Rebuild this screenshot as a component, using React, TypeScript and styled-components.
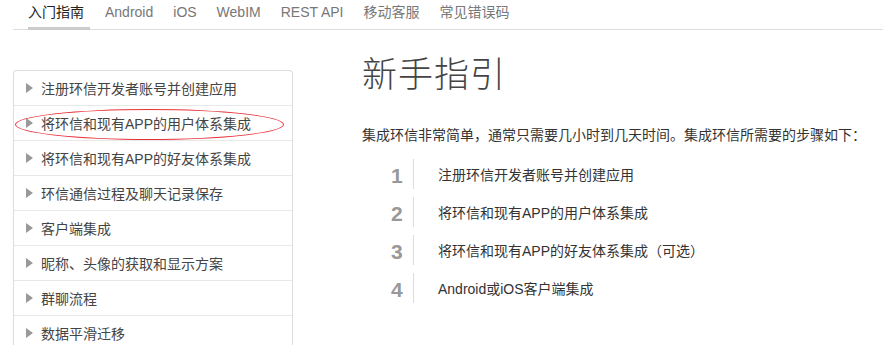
import styled, { createGlobalStyle } from "styled-components";

const GlobalStyle = createGlobalStyle`
  body {
    margin: 0;
    background: #fff;
    font-family: "Liberation Sans", Arial, "Noto Sans CJK SC", sans-serif;
    color: #333;
  }
`;

const navItems = ["入门指南", "Android", "iOS", "WebIM", "REST API", "移动客服", "常见错误码"];

const menuItems = [
  "注册环信开发者账号并创建应用",
  "将环信和现有APP的用户体系集成",
  "将环信和现有APP的好友体系集成",
  "环信通信过程及聊天记录保存",
  "客户端集成",
  "昵称、头像的获取和显示方案",
  "群聊流程",
  "数据平滑迁移",
];

const steps = [
  "注册环信开发者账号并创建应用",
  "将环信和现有APP的用户体系集成",
  "将环信和现有APP的好友体系集成（可选）",
  "Android或iOS客户端集成",
];

export default function App() {
  return (
    <>
      <GlobalStyle />
      <Header>
        <Nav>
          {navItems.map((item, i) => (
            <NavItem key={item} $active={i === 0}>
              {item}
            </NavItem>
          ))}
        </Nav>
      </Header>
      <Main>
        <Sidebar>
          {menuItems.map((item, i) => (
            <MenuRow key={item}>
              <Arrow />
              <MenuText>{item}</MenuText>
              {i === 1 && <Circle />}
            </MenuRow>
          ))}
        </Sidebar>
        <Content>
          <Title>新手指引</Title>
          <Intro>集成环信非常简单，通常只需要几小时到几天时间。集成环信所需要的步骤如下：</Intro>
          <Steps>
            {steps.map((s, i) => (
              <Step key={s}>
                <StepNum>{i + 1}</StepNum>
                <StepText>{s}</StepText>
              </Step>
            ))}
          </Steps>
        </Content>
      </Main>
    </>
  );
}

const Header = styled.div`
  margin-left: 13px;
  width: 870px;
  height: 29px;
  border-bottom: 1px solid #ddd;
`;

const Nav = styled.div`
  display: flex;
  align-items: flex-end;
  height: 29px;
  padding-left: 15px;
`;

const NavItem = styled.div<{ $active?: boolean }>`
  height: 29px;
  box-sizing: border-box;
  padding: 2px ${(p) => (p.$active ? "6px" : "0")} 0 0;
  margin-right: ${(p) => (p.$active ? "15px" : "20px")};
  font-size: 14px;
  line-height: 18px;
  color: ${(p) => (p.$active ? "#222" : "#777")};
  border-bottom: 3px solid ${(p) => (p.$active ? "#ccc" : "transparent")};
  margin-bottom: -1px;
`;

const Main = styled.div`
  display: flex;
  align-items: flex-start;
  padding-left: 13px;
`;

const Sidebar = styled.div`
  width: 278px;
  margin-top: 40px;
  border: 1px solid #ddd;
  border-bottom: none;
  border-radius: 4px 4px 0 0;
`;

const MenuRow = styled.div`
  position: relative;
  display: flex;
  align-items: center;
  height: 34px;
  border-bottom: 1px solid #e8e8e8;
  padding-left: 12px;
`;

const Arrow = styled.span`
  width: 0;
  height: 0;
  border-top: 5px solid transparent;
  border-bottom: 5px solid transparent;
  border-left: 7px solid #999;
  margin-right: 8px;
`;

const MenuText = styled.span`
  font-size: 14px;
  color: #444;
`;

const Circle = styled.div`
  position: absolute;
  left: 1px;
  top: 3px;
  width: 269px;
  height: 31px;
  box-sizing: border-box;
  border: 1px solid #e8323a;
  border-radius: 50%;
  pointer-events: none;
`;

const Content = styled.div`
  margin-left: 69px;
  margin-top: 26px;
`;

const Title = styled.h1`
  margin: 0;
  font-size: 35px;
  line-height: 38px;
  font-weight: 300;
  color: #444;
  letter-spacing: 1px;
`;

const Intro = styled.p`
  margin: 31px 0 0;
  font-size: 14px;
  line-height: 20px;
  color: #333;
`;

const Steps = styled.div`
  display: flex;
  flex-direction: column;
  gap: 8px;
  margin-top: 14px;
  padding-left: 28px;
`;

const Step = styled.div`
  display: flex;
  align-items: center;
  height: 30px;
`;

const StepNum = styled.span`
  width: 22px;
  height: 30px;
  line-height: 34px;
  font-size: 21px;
  font-weight: bold;
  color: #999;
  border-right: 1px solid #ddd;
  padding-left: 1px;
`;

const StepText = styled.span`
  margin-left: 24px;
  font-size: 14px;
  color: #333;
`;
